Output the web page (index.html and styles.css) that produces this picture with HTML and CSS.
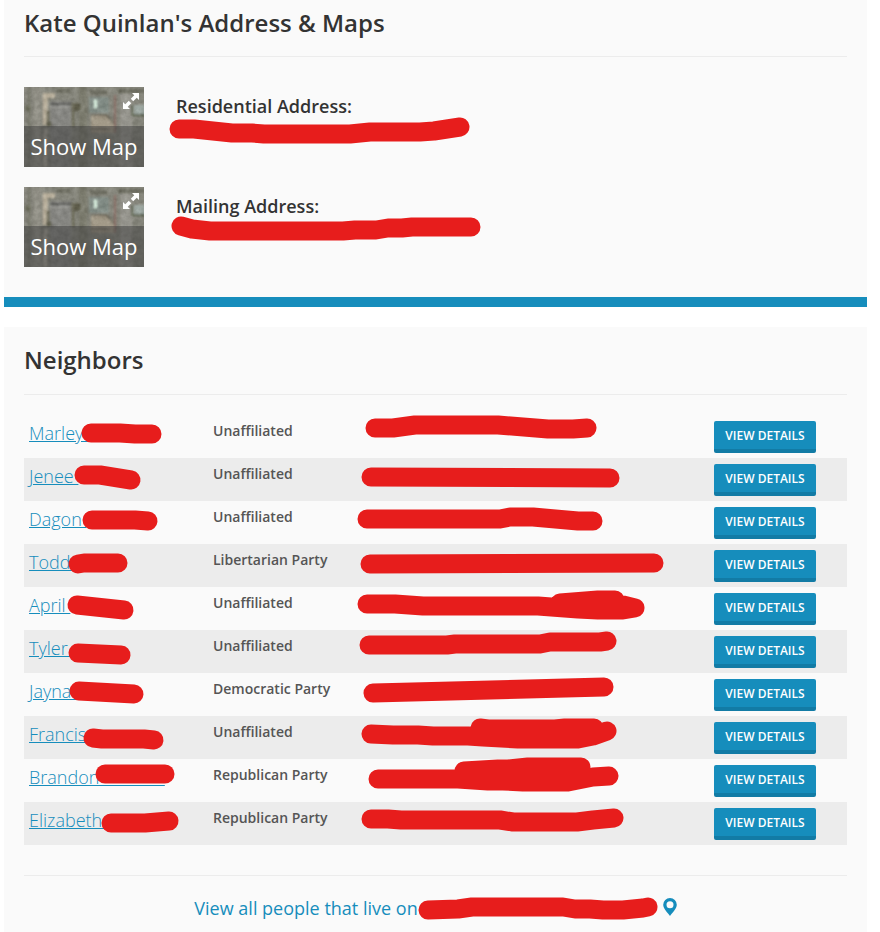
FILE: index.html
```html
<!DOCTYPE html>
<html lang="en">
  <head>
    <meta charset="UTF-8" />
    <meta name="viewport" content="width=device-width, initial-scale=1.0" />
    <title>Address &amp; Maps</title>
    <link rel="stylesheet" href="styles.css">
  </head>
  <body>
    <!-- Shared drawings -->
    <svg class="symbols" aria-hidden="true">
      <symbol id="aerial" viewBox="0 0 120 80">
        <filter id="soft" x="0" y="0" width="100%" height="100%">
          <feGaussianBlur stdDeviation="0.8" />
        </filter>
        <filter id="grain" x="0" y="0" width="100%" height="100%" color-interpolation-filters="sRGB">
          <feTurbulence type="fractalNoise" baseFrequency="0.18" numOctaves="3" seed="4" />
          <feColorMatrix values=".9 .3 0 0 -.1  .9 .3 0 0 -.1  .9 .3 0 0 -.14  0 0 0 0 1" />
        </filter>
        <rect width="120" height="80" fill="#87877d" />
        <g filter="url(#soft)">
          <rect x="-4" y="-4" width="24" height="88" fill="#8b8a81" />
          <rect x="3" y="0" width="4" height="80" fill="#7b7c70" />
          <rect x="10" y="0" width="6" height="80" fill="#96948b" />
          <path d="M19 6h12v5h-7l-1 27h-4z" fill="#c4b9a4" />
          <rect x="20" y="42" width="3" height="38" fill="#b5b0a4" />
          <rect x="26" y="14" width="21" height="70" fill="#888885" />
          <path d="M26 17h21" stroke="#4c4d4b" stroke-width="2" />
          <path d="M26 20h20" stroke="#a8a8a4" />
          <path d="M24 24v12M49 16v24" stroke="#6c6a57" stroke-width="3" />
          <rect x="54" y="-4" width="10" height="88" fill="#7c7c6e" />
          <circle cx="53" cy="20" r="4" fill="#5c5a47" />
          <circle cx="25" cy="37" r="3" fill="#504f3e" />
          <circle cx="4" cy="21" r="3" fill="#666855" />
          <rect x="65" y="10" width="20" height="16" fill="#84908a" />
          <rect x="70" y="13" width="3" height="8" fill="#e6ffee" />
          <path d="M67 29l14-1 9 10v8H67z" fill="#a89e8b" />
          <path d="M67 28h15l9 9M66 42h20" fill="none" stroke="#6a6354" stroke-width="1.5" />
          <path d="M91 8v38" stroke="#8c6c64" stroke-width="2" />
          <rect x="96" y="7" width="12" height="77" fill="#9b9a93" />
          <rect x="110" y="18" width="14" height="10" fill="#a4b0ab" />
          <path d="M108 18v10h14" fill="none" stroke="#566048" stroke-width="2" />
          <path d="M32 4h14M66 5h17M94 4h26" stroke="#6c6c5f" stroke-width="4" />
          <path d="M20 60h100M0 54h18" stroke="#77786f" stroke-width="2" />
        </g>
        <rect width="120" height="80" filter="url(#grain)" opacity="0.15" />
      </symbol>
      <symbol id="expand" viewBox="0 0 16 16">
        <path d="M9 0h7v7zM7 16H0V9z" fill="#fff" />
        <path d="M13 3L9 7M7 9l-4 4" stroke="#fff" stroke-width="3.500" />
      </symbol>
    </svg>

    <section class="card address-card">
      <h2>Kate Quinlan's Address &amp; Maps</h2>
      <div class="address">
        <button type="button" class="map-thumb">
          <svg class="aerial" aria-hidden="true"><use href="#aerial" /></svg>
          <svg class="expand" aria-hidden="true"><use href="#expand" /></svg>
          <span class="map-label">Show Map</span>
        </button>
        <div class="address-text">
          <h3>Residential Address:</h3>
          <svg class="marker" aria-hidden="true"><path d="M3 11H18L56 15H76L88 16H174L194 14H244L258 13L284 9" /></svg>
        </div>
      </div>
      <div class="address">
        <button type="button" class="map-thumb">
          <svg class="aerial" aria-hidden="true"><use href="#aerial" /></svg>
          <svg class="expand" aria-hidden="true"><use href="#expand" /></svg>
          <span class="map-label">Show Map</span>
        </button>
        <div class="address-text">
          <h3>Mailing Address:</h3>
          <svg class="marker" aria-hidden="true"><path d="M5 8L16 11L34 13H167L179 12H200L212 10H226L236 9H295" /></svg>
        </div>
      </div>
    </section>

    <section class="card neighbors-card">
      <h2>Neighbors</h2>
      <table class="neighbors">
        <tbody>
          <tr>
            <td class="name"><a href="#">Marley </a><svg class="marker" aria-hidden="true"><path d="M67 18H96L111 19H128" /></svg></td>
            <td class="party">Unaffiliated</td>
            <td class="street"><svg class="marker" aria-hidden="true"><path d="M22 13H40L62 10H145L195 14H220L234 13" /></svg></td>
            <td class="action"><button type="button" class="btn">View Details</button></td>
          </tr>
          <tr>
            <td class="name"><a href="#">Jenee </a><svg class="marker" aria-hidden="true"><path d="M60 17H76L107 22" /></svg></td>
            <td class="party">Unaffiliated</td>
            <td class="street"><svg class="marker" aria-hidden="true"><path d="M18 19L257 20" /></svg></td>
            <td class="action"><button type="button" class="btn">View Details</button></td>
          </tr>
          <tr>
            <td class="name"><a href="#">Dagon </a><svg class="marker" aria-hidden="true"><path d="M68 19H111L124 20" /></svg></td>
            <td class="party">Unaffiliated</td>
            <td class="street"><svg class="marker" aria-hidden="true"><path d="M14 18H147L157 16H180L225 20L240 20" /></svg></td>
            <td class="action"><button type="button" class="btn">View Details</button></td>
          </tr>
          <tr>
            <td class="name"><a href="#">Todd </a><svg class="marker" aria-hidden="true"><path d="M54 20L60 19H94" /></svg></td>
            <td class="party">Libertarian Party</td>
            <td class="street"><svg class="marker" aria-hidden="true"><path d="M17 20L301 19" /></svg></td>
            <td class="action"><button type="button" class="btn">View Details</button></td>
          </tr>
          <tr>
            <td class="name"><a href="#">April </a><svg class="marker" aria-hidden="true"><path d="M53 18L100 23" /></svg></td>
            <td class="party">Unaffiliated</td>
            <td class="street"><svg class="marker" aria-hidden="true"><path d="M14 17H42L70 19H185L225 22L245 23H270L282 21L270 18M207 16L245 13H262" /></svg></td>
            <td class="action"><button type="button" class="btn">View Details</button></td>
          </tr>
          <tr>
            <td class="name"><a href="#">Tyler </a><svg class="marker" aria-hidden="true"><path d="M54 23L97 25" /></svg></td>
            <td class="party">Unaffiliated</td>
            <td class="street"><svg class="marker" aria-hidden="true"><path d="M16 15H94L102 14H187L197 12H247L254 11" /></svg></td>
            <td class="action"><button type="button" class="btn">View Details</button></td>
          </tr>
          <tr>
            <td class="name"><a href="#">Jayna </a><svg class="marker" aria-hidden="true"><path d="M55 18L110 21" /></svg></td>
            <td class="party">Democratic Party</td>
            <td class="street"><svg class="marker" aria-hidden="true"><path d="M20 20L251 14" /></svg></td>
            <td class="action"><button type="button" class="btn">View Details</button></td>
          </tr>
          <tr>
            <td class="name"><a href="#">Francis </a><svg class="marker" aria-hidden="true"><path d="M69 22L78 23H120L130 24" /></svg></td>
            <td class="party">Unaffiliated</td>
            <td class="street"><svg class="marker" aria-hidden="true"><path d="M18 18L40 19H65L80 20H115L130 21L165 23H225L240 20L254 15M127 12L135 13H202L212 12H241" /></svg></td>
            <td class="action"><button type="button" class="btn">View Details</button></td>
          </tr>
          <tr>
            <td class="name"><a href="#">Brandon              </a><svg class="marker" aria-hidden="true"><path d="M81 15H141" /></svg></td>
            <td class="party">Republican Party</td>
            <td class="street"><svg class="marker" aria-hidden="true"><path d="M25 20H105L135 22H150L170 23H215L240 18L256 17M111 12L145 10H155L175 8H228" /></svg></td>
            <td class="action"><button type="button" class="btn">View Details</button></td>
          </tr>
          <tr>
            <td class="name"><a href="#">Elizabeth </a><svg class="marker" aria-hidden="true"><path d="M87 21H121L145 19" /></svg></td>
            <td class="party">Republican Party</td>
            <td class="street"><svg class="marker" aria-hidden="true"><path d="M18 17H35L48 18H147L160 20H224L240 18L261 16" /></svg></td>
            <td class="action"><button type="button" class="btn">View Details</button></td>
          </tr>
        </tbody>
      </table>
      <div class="view-all">
        <a href="#">
          View all people that live on
          <svg class="marker" aria-hidden="true"><path d="M10 14L40 13L54 11H145L157 13H172L185 14H205L225 12L230 11" /></svg>
          <svg class="pin" viewBox="0 0 14 18" aria-hidden="true"><path fill-rule="evenodd" d="M7 0a6.800 6.800 0 0 1 6.800 6.800C13.800 11 9 15 7 18 5 15 .2 11 .2 6.800A6.800 6.800 0 0 1 7 0zm0 3.200a3.500 3.500 0 1 0 0 7 3.500 3.500 0 0 0 0-7z" fill="#168dbc" /></svg>
        </a>
      </div>
    </section>
  </body>
</html>
```

FILE: styles.css
```css
* {
  box-sizing: border-box;
}

body {
  margin: 0 13px 0 4px;
  background-color: #fff;
  color: #333;
  font-family: "Open Sans", "Noto Sans", sans-serif;
}

.symbols {
  position: absolute;
  width: 0;
  height: 0;
}

.card {
  background-color: #fafafa;
  padding: 15px 20px 20px;
}

.address-card {
  padding-top: 5px;
  padding-bottom: 30px;
  border-bottom: 10px solid #168dbc;
  margin-bottom: 20px;
}

h2 {
  margin: 0;
  padding-bottom: 15px;
  border-bottom: 1px solid #ececec;
  font-size: 24px;
  line-height: 36px;
  font-weight: 600;
}

.neighbors-card h2 {
  padding-bottom: 16px;
}

h3 {
  margin: 0;
  font-size: 18px;
  line-height: 24px;
  font-weight: 600;
}

/* Red marker strokes over private details */
.marker {
  display: block;
  overflow: visible;
  fill: none;
  stroke: #e71d1c;
  stroke-width: 19px;
  stroke-linecap: round;
  stroke-linejoin: round;
}

.address {
  display: flex;
  gap: 32px;
  margin-top: 20px;
}

h2 + .address {
  margin-top: 30px;
}

.address-text {
  padding-top: 7px;
}

.address-text .marker {
  width: 300px;
  height: 24px;
}

.map-thumb {
  position: relative;
  width: 120px;
  height: 80px;
  padding: 0;
  border: 0;
  overflow: hidden;
  cursor: pointer;
}

.aerial {
  display: block;
  width: 120px;
  height: 80px;
}

.expand {
  position: absolute;
  top: 6px;
  right: 5px;
  width: 16px;
  height: 16px;
}

.map-label {
  position: absolute;
  left: 0;
  right: 0;
  bottom: 0;
  height: 41px;
  background-color: rgba(60, 60, 60, 0.5);
  color: #fff;
  font-family: "Open Sans", "Noto Sans", sans-serif;
  font-size: 22px;
  line-height: 41px;
  text-align: center;
  white-space: nowrap;
}

.neighbors {
  width: 100%;
  margin-top: 20px;
  border-collapse: collapse;
  table-layout: fixed;
}

.neighbors td {
  height: 43px;
  padding: 6px 5px 5px;
  vertical-align: top;
}

.neighbors tr:nth-child(even) {
  background-color: #ececec;
}

.neighbors .name {
  position: relative;
  width: 184px;
  font-size: 18px;
  line-height: 25px;
  font-weight: 300;
}

.name a {
  color: #168dbc;
  white-space: pre;
}

.name .marker {
  position: absolute;
  top: 0;
  left: 0;
  width: 160px;
  height: 43px;
}

.neighbors .party {
  width: 145px;
  color: #555;
  font-size: 14px;
  line-height: 20px;
  font-weight: 600;
  white-space: nowrap;
}

.neighbors .street {
  padding: 0;
}

.street .marker {
  width: 310px;
  height: 43px;
}

.neighbors .action {
  width: 138px;
}

.btn {
  display: block;
  width: 102px;
  height: 32px;
  padding: 0;
  border: 0;
  border-bottom: 4px solid #127ba5;
  border-radius: 2px;
  background-color: #168dbc;
  color: #fff;
  font-family: "Open Sans", "Noto Sans", sans-serif;
  font-size: 12px;
  font-weight: 600;
  text-transform: uppercase;
  cursor: pointer;
}

.view-all {
  margin-top: 30px;
  padding-top: 20px;
  border-top: 1px solid #ececec;
}

.view-all a {
  display: flex;
  justify-content: center;
  color: #168dbc;
  font-size: 18px;
  line-height: 24px;
  text-decoration: none;
}

.view-all .marker {
  width: 241px;
  height: 24px;
}

.pin {
  width: 14px;
  height: 18px;
  margin: 2px 0 0 4px;
}
```
